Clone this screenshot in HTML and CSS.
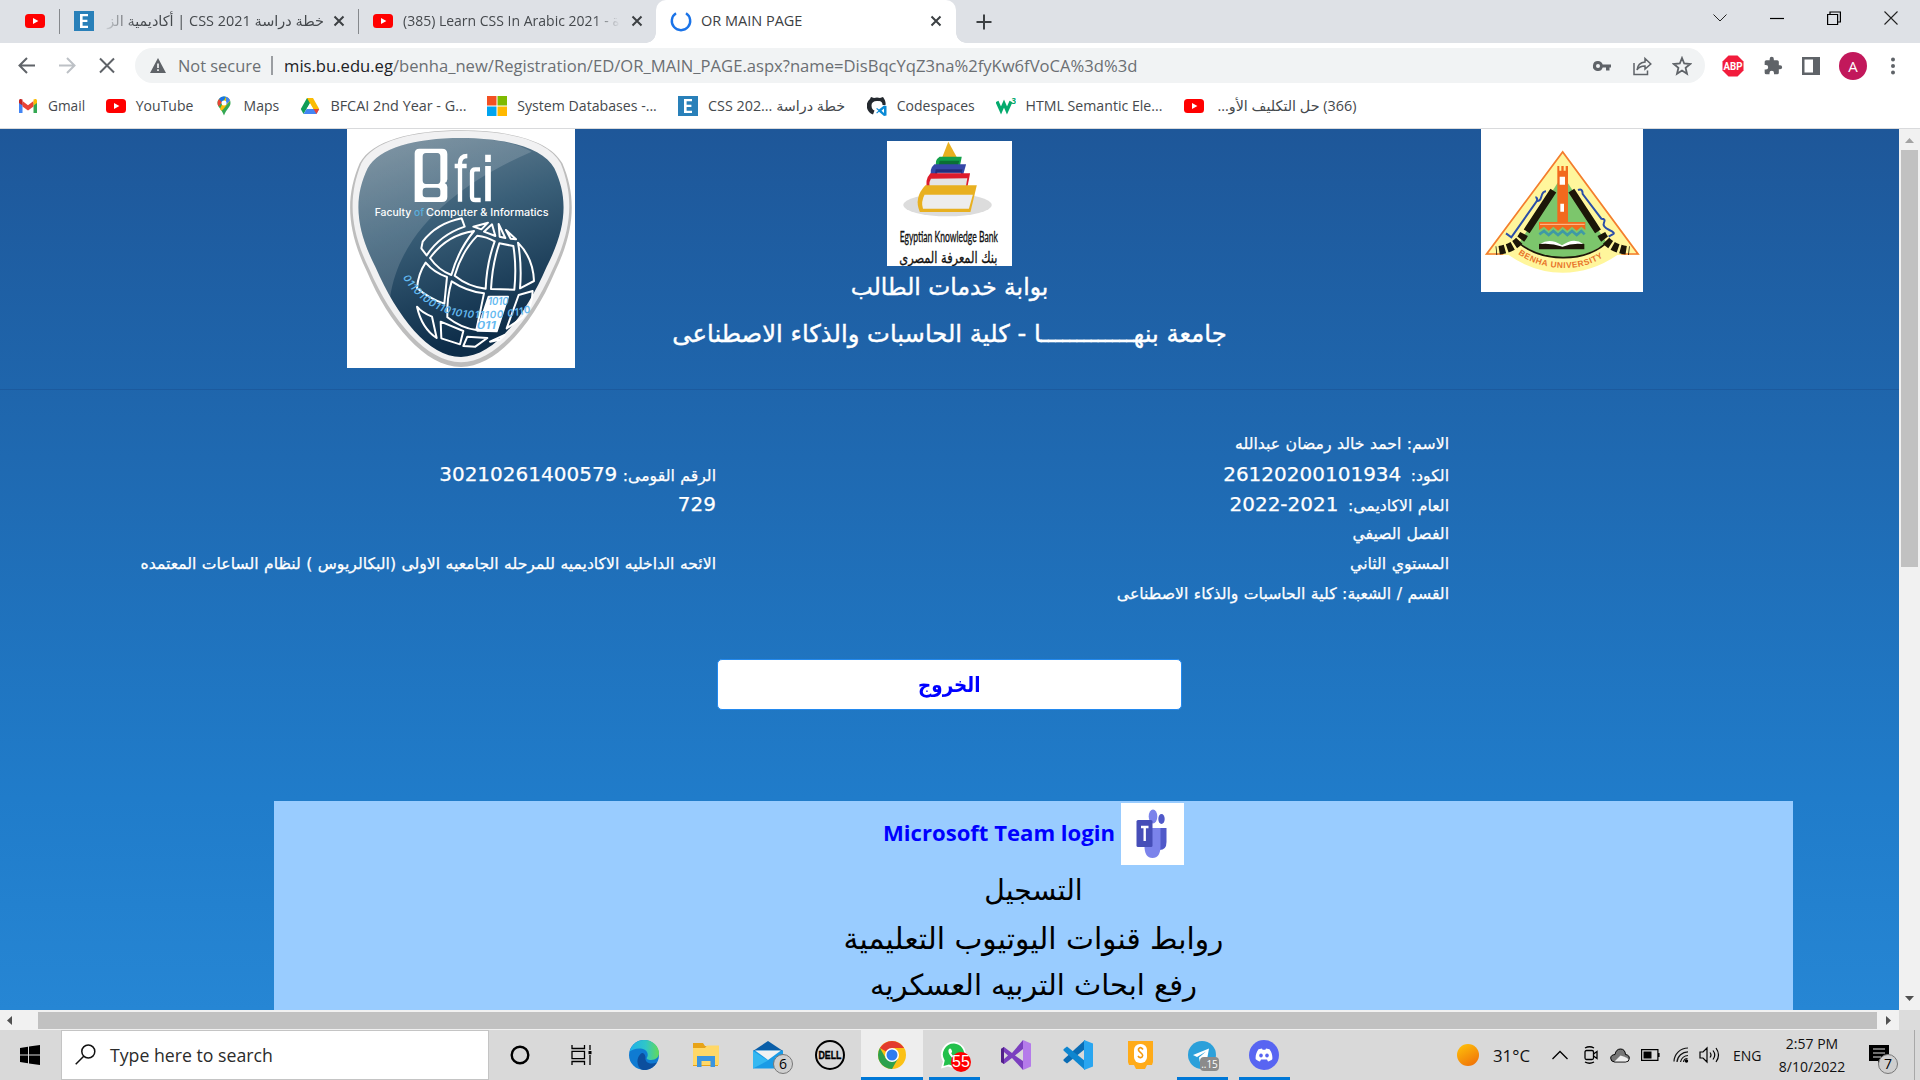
FILE: index.html
```html
<!DOCTYPE html>
<html lang="en">
<head>
<meta charset="utf-8">
<title>OR MAIN PAGE</title>
<link rel="stylesheet" href="styles.css">
</head>
<body>
<svg width="0" height="0" class="defs">
  <symbol id="yt" viewBox="0 0 20 14"><rect width="20" height="14" rx="3.5" fill="#f00"/><path d="M8 4l5.4 3L8 10z" fill="#fff"/></symbol>
  <symbol id="elz" viewBox="0 0 20 20"><path fill="#2980b9" d="M0 0h20v20H0z"/><path fill="#fff" d="M6 3h8v2.2H8.6v3.6h4.8V11H8.6v3.8H14V17H6z"/></symbol>
  <symbol id="x" viewBox="0 0 12 12"><path d="M1.5 1.5l9 9m0-9l-9 9" stroke="#3c4043" stroke-width="2" fill="none"/></symbol>
</svg>

<div class="tabstrip">
  <div class="tab tab-pinned"><svg width="20" height="14"><use href="#yt"/></svg></div>
  <div class="tab tab-a"><svg width="20" height="20"><use href="#elz"/></svg><span class="tab-title rtl fade-l" dir="rtl">خطة دراسة CSS 2021 | أكاديمية الز</span><svg width="12" height="12"><use href="#x"/></svg></div>
  <div class="tab tab-b"><svg width="20" height="14"><use href="#yt"/></svg><span class="tab-title fade-r">(385) Learn CSS In Arabic 2021 - ة</span><svg width="12" height="12"><use href="#x"/></svg></div>
  <div class="tab tab-active">
    <svg width="22" height="22" viewBox="0 0 22 22"><path d="M6 3.3A9.2 9.2 0 1 0 16 3.3" fill="none" stroke="#1a73e8" stroke-width="2.4"/></svg>
    <span class="tab-title wide">OR MAIN PAGE</span><svg width="12" height="12"><use href="#x"/></svg>
  </div>
  <svg class="plus" width="16" height="16" viewBox="0 0 16 16"><path d="M8 .5v15M.5 8h15" stroke="#3c4043" stroke-width="2"/></svg>
  <div class="winbtns">
    <svg width="14" height="14" viewBox="0 0 14 14"><path d="M.5 3.5L7 10l6.500-6.500" fill="none" stroke="#222"/></svg>
    <svg width="14" height="14" viewBox="0 0 14 14"><path d="M0 7.500h14" stroke="#000" stroke-width="1.200"/></svg>
    <svg width="14" height="14" viewBox="0 0 14 14"><path d="M.6 3.500h10v10h-10zM3 3.500V1h10.400v10h-2.600" fill="none" stroke="#000" stroke-width="1.200"/></svg>
    <svg width="14" height="14" viewBox="0 0 14 14"><path d="M.5.5l13 13m0-13l-13 13" fill="none" stroke="#222" stroke-width="1.100"/></svg>
  </div>
</div>

<div class="toolbar">
  <svg class="nav" width="20" height="20" viewBox="0 0 20 20"><path d="M18 9.500H3M10 2L2.500 9.500 10 17" fill="none" stroke="#5f6368" stroke-width="2"/></svg>
  <svg class="nav" width="20" height="20" viewBox="0 0 20 20"><path d="M2 9.500h15M10 2l7.500 7.500L10 17" fill="none" stroke="#bdc1c6" stroke-width="2"/></svg>
  <svg class="nav" width="20" height="20" viewBox="0 0 20 20"><path d="M3 2.500l14 14m0-14l-14 14" stroke="#5f6368" stroke-width="2"/></svg>
  <div class="omnibox">
    <svg width="16" height="15" viewBox="0 0 16 15"><path d="M8 0l8 15H0z" fill="#5f6368"/><path d="M8 5.500v4.500M8 11.300V13" stroke="#f1f3f4" stroke-width="1.700"/></svg>
    <span class="notsec">Not secure</span><i class="bar"></i>
    <span class="url"><b>mis.bu.edu.eg</b>/benha_new/Registration/ED/OR_MAIN_PAGE.aspx?name=DisBqcYqZ3na%2fyKw6fVoCA%3d%3d</span>
    <svg width="20" height="20" viewBox="0 0 20 20"><path d="M6 5a5 5 0 1 0 4.700 6.500H14V14.500h3.500v-3H19v-3h-8.300A5 5 0 0 0 6 5z" fill="#5f6368"/><circle cx="6" cy="10" r="2" fill="#f1f3f4"/></svg>
    <svg width="20" height="20" viewBox="0 0 20 20"><path d="M2 7v11.500h13.500v-4" fill="none" stroke="#5f6368" stroke-width="1.500"/><path d="M5 14c.5-5 3-7.500 8-8V2.500L18.800 8 13 13v-3c-4 0-6.300 1-8 4z" fill="none" stroke="#5f6368" stroke-width="1.500"/></svg>
    <svg width="20" height="20" viewBox="0 0 20 20"><path d="M10 2l2.200 5.500 6 .5-4.600 3.900L15 17.700l-5-3.200-5 3.200 1.400-5.800L1.800 8l6-.5z" fill="none" stroke="#5f6368" stroke-width="1.800"/></svg>
  </div>
  <div class="exts">
    <svg width="22" height="22" viewBox="0 0 22 22"><path d="M6.500.5h9l6 6v9l-6 6h-9l-6-6v-9z" fill="#f21c3c"/><text x="11" y="14.600" text-anchor="middle" font-size="10" font-weight="700" fill="#fff" textLength="19" lengthAdjust="spacingAndGlyphs" font-family="Roboto">ABP</text></svg>
    <svg width="20" height="20" viewBox="0 0 24 24"><path fill="#5f6368" d="M20.500 11H19V7a2 2 0 0 0-2-2h-4V3.500a2.500 2.500 0 0 0-5 0V5H4a2 2 0 0 0-2 2v3.800h1.500a2.700 2.700 0 0 1 0 5.400H2V20a2 2 0 0 0 2 2h3.800v-1.500a2.700 2.700 0 0 1 5.400 0V22H17a2 2 0 0 0 2-2v-4h1.500a2.500 2.500 0 0 0 0-5z"/></svg>
    <svg width="18" height="18" viewBox="0 0 18 18"><path fill="#5f6368" d="M0 0h18v18H0zM2.500 2.500v13h8.500v-13z" fill-rule="evenodd"/></svg>
    <span class="avatar">A</span>
    <svg width="6" height="18" viewBox="0 0 6 18"><g fill="#5f6368"><circle cx="3" cy="2.500" r="2"/><circle cx="3" cy="9" r="2"/><circle cx="3" cy="15.500" r="2"/></g></svg>
  </div>
</div>

<div class="bookmarks">
  <div class="bm"><svg width="20" height="20" viewBox="0 0 20 20"><path d="M1 17V4.500l3.500 2.700V17z" fill="#4285f4"/><path d="M15.500 17V7.200L19 4.500V17z" fill="#34a853"/><path d="M4.500 10.500V5l5.500 4.200L15.500 5v5.500L10 14.600z" fill="#ea4335"/><path d="M1 4.500c0-1.800 2-2 3.500-.9v5.900L1 7z" fill="#c5221f"/><path d="M19 4.500c0-1.800-2-2-3.500-.9v5.900L19 7z" fill="#fbbc04"/></svg><span style="width:37px">Gmail</span></div>
  <div class="bm"><svg width="20" height="14"><use href="#yt"/></svg><span style="width:57px">YouTube</span></div>
  <div class="bm"><svg width="20" height="20" viewBox="0 0 20 20"><path d="M10 .5A6.500 6.500 0 0 0 3.500 7c0 4 4 6 6.500 12.500C12.500 13 16.500 11 16.500 7A6.500 6.500 0 0 0 10 .5z" fill="#34a853"/><path d="M5 2.900A6.500 6.500 0 0 1 12 .8L7.500 6.400z" fill="#1a73e8"/><path d="M5 2.900c-2 2.500-1.800 5.200-.3 7.500L8 6.500z" fill="#ea4335"/><path d="M12 .8c2 .7 3.500 2 4.200 4L9 13.500c-1.400 1.500-2 1.300-3-.8z" fill="#fbbc04"/><path d="M12 .8c1.800.6 3.300 1.800 4 3.600L12 9z" fill="#4285f4"/><circle cx="10" cy="7" r="2.500" fill="#fff"/></svg><span style="width:36px">Maps</span></div>
  <div class="bm"><svg width="20" height="20" viewBox="0 0 20 20"><path d="M7 2h6l-6.500 11L3.500 18 .8 13z" fill="#0f9d58"/><path d="M7 2h6l6.200 11h-6z" fill="#fbbc04"/><path d="M6.600 13h12.600l-2.800 5H3.600z" fill="#4285f4"/><path d="M10 7.500L13.200 13H6.800z" fill="#fff"/><path d="M13.500 13h5.700l-2.700 5z" fill="#ea4335"/></svg><span style="width:136px" class="sp2">BFCAI 2nd Year - G...</span></div>
  <div class="bm"><svg width="20" height="20" viewBox="0 0 20 20"><path fill="#f25022" d="M0 0h9.500v9.500H0z"/><path fill="#7fba00" d="M10.500 0H20v9.500h-9.500z"/><path fill="#00a4ef" d="M0 10.500h9.500V20H0z"/><path fill="#ffb900" d="M10.500 10.500H20V20h-9.500z"/></svg><span style="width:140px" class="sp1">System Databases -...</span></div>
  <div class="bm"><svg width="20" height="20"><use href="#elz"/></svg><span style="width:138px" class="big">CSS 202... خطة دراسة</span></div>
  <div class="bm"><svg width="20" height="20" viewBox="0 0 20 20"><path d="M6 18.500A9 9 0 0 1 3 3l1-2 3 1a10 10 0 0 1 6 0l3-1c2 3 3 5 2.500 8h-3c0-3.500-2-4-5.500-4S4.500 6.500 4.500 9.500c0 3 1.500 4.500 3 5z" fill="#24292f"/><path d="M19.500 10v9.500l-2.500.5-5-4.200-2 1.600-.8-.7 2.200-2-2.200-2 .8-.8 2 1.600L17 9.500zM17 12.500l-2.500 2.200L17 17z" fill="#0a8ad6" fill-rule="evenodd"/></svg><span style="width:78px">Codespaces</span></div>
  <div class="bm"><svg width="20" height="20" viewBox="0 0 20 20"><path d="M1 5.500l4 9 3-7 3 7 4-9" fill="none" stroke="#04aa6d" stroke-width="3.200"/><text x="15.500" y="8" font-size="8" font-weight="700" fill="#04aa6d" font-family="Open Sans">3</text></svg><span style="width:138px" class="sp1">HTML Semantic Ele...</span></div>
  <div class="bm"><svg width="20" height="14"><use href="#yt"/></svg><span style="width:142px" class="big" dir="rtl">(366) حل التكليف الأو...</span></div>
</div>

<div class="view">
  <div class="page">
    <header class="hero">
      <svg class="bfci" width="228" height="239" viewBox="51 27 684 717">
        <defs>
          <linearGradient id="g1" x1="0" y1="0" x2=".3" y2="1"><stop offset="0" stop-color="#6f8797"/><stop offset=".45" stop-color="#3a5f78"/><stop offset="1" stop-color="#0d2d49"/></linearGradient>
          <linearGradient id="g2" x1="0" y1="0" x2="1" y2="1"><stop offset="0" stop-color="#fff" stop-opacity=".14"/><stop offset="1" stop-color="#fff" stop-opacity=".16"/></linearGradient>
        </defs>
        <path fill="#fff" d="M51 27h684v717H51z"/>
        <path fill="#bdbdbd" d="M393 31C540 31 660 62 697 130C740 230 735 330 675 455C610 610 500 741 393 741C286 741 176 610 111 455C50 330 46 230 89 130C126 62 246 31 393 31z"/>
        <path fill="#f1f1f2" d="M393 33C540 33 655 62 692 130C732 230 727 325 668 448C602 600 496 727 393 727C290 727 184 600 118 448C58 325 54 230 94 130C131 62 246 33 393 33z"/>
        <path fill="url(#g1)" d="M393 54C530 54 640 84 673 145C714 230 712 320 650 440C585 590 490 711 393 711C296 711 201 590 136 440C74 320 72 230 113 145C146 84 256 54 393 54z"/>
        <path fill="url(#g2)" d="M393 54C470 54 550 64 605 95C430 170 210 310 180 535C160 500 150 475 136 440C74 320 72 230 113 145C146 84 256 54 393 54z"/>
        <path fill="#fff" fill-rule="evenodd" d="M254 100q0-14 14-14h68q16 0 16 16v76q0 8-8 11q8 3 8 12v30q0 15-16 15h-82zM278 110q0-11 10-11h34q9 0 9 11v71q0 11-9 11h-34q-10 0-10-11zM278 213q0-10 10-10h34q9 0 9 10v9q0 10-9 10h-34q-10 0-10-10z"/>
        <g fill="none" stroke="#fff"><path d="M390 245V130q0-22 22-22M374 138h36M450 148h-14q-10 0-10 10v72q0 10 10 10h16" stroke-width="13"/><path d="M474 138v106M474 104v22" stroke-width="17"/></g>
        <g font-family="Inter" font-size="29" font-weight="500" fill="#fff"><text x="134" y="287" textLength="110" lengthAdjust="spacingAndGlyphs">Faculty</text><text x="252" y="287" textLength="30" lengthAdjust="spacingAndGlyphs" fill="#5aaede">of</text><text x="288" y="287" textLength="368" lengthAdjust="spacingAndGlyphs">Computer &amp; Informatics</text></g>
        <g fill="none" stroke="#fff" stroke-width="6" stroke-linejoin="round">
          <path d="M395 295Q320 310 278 365L274 385L290 406Q330 345 404 320z"/>
          <path d="M300 414Q350 345 432 333Q385 390 364 465Q325 450 300 414z"/>
          <path d="M374 467Q395 395 442 347Q470 350 494 364Q470 430 467 506Q415 500 374 467z"/>
          <path d="M508 370l42 8q10 60 3 131l-70-2q4-75 25-137z"/>
          <path d="M564 368q45 45 48 115l-42 22q6-70-6-137z"/>
          <path d="M430 320l44-12-20 20zM462 335l24-22 10 35zM506 312l20 42-17-4zM528 330l30 28-16-2z"/>
          <path d="M287 428q25 30 64 43l-8 80q-45-15-82-47q4-44 26-76z"/>
          <path d="M365 484q45 30 97 36l-23 110q-45-5-87-38q-2-60 13-108z"/>
          <path d="M476 530h58l-34 104-58-2z" fill="#fff"/>
          <path d="M566 525l42-12q0 45-30 80l-48 32z"/>
          <path d="M261 560q15 18 45 30l14 64q-45-30-59-94z"/>
          <path d="M332 605l68 28-10 40-56-18zM412 650l60 4-36 26-36-2zM480 665l44-20-14 14z"/>
        </g>
        <path id="bits" d="M218 472Q290 588 430 594T640 560" fill="none"/>
        <text font-family="Inter" font-size="30" font-style="italic" font-weight="600" fill="#64b9f0"><textPath href="#bits" textLength="430">0110100110101011100 0110</textPath></text>
        <g font-family="Inter" font-size="30" font-style="italic" fill="#64b9f0" font-weight="600"><text x="474" y="556" textLength="62" lengthAdjust="spacingAndGlyphs">1010</text><text x="440" y="628" textLength="58" lengthAdjust="spacingAndGlyphs">011</text></g>
      </svg>

      <div class="title">
        <svg width="125" height="125" viewBox="625 33 316 375" preserveAspectRatio="none">
          <path fill="#fff" d="M625 33h316v375H625z"/>
          <ellipse cx="778" cy="225" rx="112" ry="34" fill="#dcdcdc"/>
          <path d="M780 35l24 52h-41z" fill="#e8b020"/>
          <path d="M758 80h56l-5 30h-58q-8-18 7-30z" fill="#12a04a"/><path d="M758 92h50l-4 14h-48z" fill="#0b6f35"/>
          <path d="M745 103h80l-10 42h-77q-8-28 7-42z" fill="#3547a8"/><path d="M748 118h68l-5 20h-65z" fill="#222e7e"/><path d="M752 130h60" stroke="#dfe3ff" stroke-width="3"/>
          <path d="M735 130h100l-9 56h-98q-10-36 7-56z" fill="#dd1c2c"/><path d="M736 146l92-1-5 34h-87q-8-16 0-33z" fill="#e4e4e4"/>
          <path d="M722 166h130l-16 80H708q-16-42 14-80z" fill="#e8b020"/><path d="M720 194h122l-10 42H716q-6-20 4-42z" fill="#ededed"/>
          <g text-anchor="middle" fill="#111"><text x="781" y="337" font-family="Lato" font-size="44" textLength="248" lengthAdjust="spacingAndGlyphs" stroke="#111">Egyptian Knowledge Bank</text><text x="780" y="398" font-family="DejaVu Sans" font-size="46" textLength="248" lengthAdjust="spacingAndGlyphs" stroke="#111">بنك المعرفة المصرى</text></g>
        </svg>
        <h1 dir="rtl" class="h-a">بوابة خدمات الطالب</h1>
        <h1 dir="rtl" class="h-b">جامعة بنهـــــــــــــا - كلية الحاسبات والذكاء الاصطناعى</h1>
      </div>

      <svg class="benha" width="162" height="163" viewBox="63 27 486 489">
        <path fill="#fff" d="M63 27h486v489H63z"/>
        <path d="M308 92L540 405H472Q395 458 308 458T146 405H74z" fill="#fff69c"/>
        <path d="M130 402H80L308 96 534 402h-50" fill="none" stroke="#f47b30" stroke-width="5"/>
        <path d="M308 165L440 368Q380 412 308 413T178 368z" fill="#7cc66c"/>
        <path d="M280 212L200 334M334 212L414 334" stroke="#1c1608" stroke-width="21" fill="none"/>
        <path d="M192 342q-22 44-84 50M424 342q22 44 84 50" stroke="#1c1608" stroke-width="26" stroke-dasharray="18 7" fill="none"/>
        <path d="M178 370Q230 412 308 413T438 370" fill="none" stroke="#1c1608" stroke-width="5"/>
        <path d="M292 138h6v14h6v-14h7v14h6v-14h7v170H292z" fill="#f26a1e"/><path d="M299 170h16v24h-16zM301 251h11v24h-11z" fill="#fff"/>
        <path d="M237 306h139v24l-12-10-14 12-14-12-14 12-14-12-14 12-14-12-14 12-14-12-15 10z" fill="#f26a1e"/><path d="M240 313h134" stroke="#ffc69a" stroke-width="3"/>
        <path d="M238 343l14-10 14 12 14-12 14 12 14-12 14 12 14-12 14 12 14-12 10 10" fill="none" stroke="#3f9aa5" stroke-width="8"/>
        <path d="M237 372q40-12 70 8q30-20 66-8v16H237z" fill="#1c1608"/><path d="M240 372q30-20 66 4q35-26 64-4q-34-4-62 8q-36-12-68-8z" fill="#fff"/>
        <g fill="none" stroke="#2b4ea8" stroke-width="6"><path d="M138 340l16 12 76-108q4-12-4-12m2 10q12 4 16-12t14-16"/><path d="M354 210q14-6 14 12l56 74q14 0 8 12t16 22 8 14l-10 6"/></g>
        <path id="bu" d="M174 402Q230 442 308 444T443 402" fill="none"/>
        <text font-family="Liberation Sans" font-size="25" font-weight="700" fill="#e8742a"><textPath href="#bu" textLength="270">BENHA UNIVERSITY</textPath></text>
      </svg>
    </header>

    <section class="info" dir="rtl">
      <div class="col col-r">
        <p>الاسم: احمد خالد رمضان عبدالله</p>
        <p>الكود: <b>26120200101934</b></p>
        <p>العام الاكاديمى: <b dir="ltr">2022-2021</b></p>
        <p>الفصل الصيفي</p>
        <p>المستوي الثاني</p>
        <p>القسم / الشعبة: كلية الحاسبات والذكاء الاصطناعى</p>
      </div>
      <div class="col col-l">
        <p>&nbsp;</p>
        <p>الرقم القومى: <b>30210261400579</b></p>
        <p><b>729</b></p>
        <p>&nbsp;</p>
        <p class="long">الائحه الداخليه الاكاديميه للمرحله الجامعيه الاولى (البكالريوس ) لنظام الساعات المعتمده</p>
      </div>
    </section>

    <div class="exit" dir="rtl"><span>الخروج</span></div>

    <section class="panel">
      <div class="teams"><span>Microsoft Team login</span>
        <svg width="63" height="62" viewBox="0 0 63 62"><path fill="#fff" d="M0 0h63v62H0z"/><g><ellipse cx="40.500" cy="16" rx="3.200" ry="5" fill="#5059c9"/><path d="M36 25h9.500v14q0 8-7 8h-3z" fill="#5059c9"/><ellipse cx="32" cy="13.500" rx="4.300" ry="7" fill="#7b83eb"/><path d="M24 25h15.500v18q0 12-8 12t-8-12z" fill="#7b83eb"/><rect x="15.500" y="17" width="16" height="27" rx="1.500" fill="#464eb8"/><path d="M20 24h7.500M23.700 24v14" stroke="#fff" stroke-width="2.400"/></g></svg>
      </div>
      <p dir="rtl" class="p1">التسجيل</p>
      <p dir="rtl" class="p2">روابط قنوات اليوتيوب التعليمية</p>
      <p dir="rtl" class="p3">رفع ابحاث التربيه العسكريه</p>
    </section>
  </div>
  <div class="vbar">
    <svg width="9" height="5" viewBox="0 0 9 5"><path d="M0 5l4.500-5L9 5z" fill="#a3a3a3"/></svg>
    <i></i>
    <svg width="9" height="5" viewBox="0 0 9 5"><path d="M0 0l4.500 5L9 0z" fill="#505050"/></svg>
  </div>
</div>
<div class="hbar">
  <svg width="5" height="9" viewBox="0 0 5 9"><path d="M5 0L0 4.500 5 9z" fill="#505050"/></svg>
  <i></i>
  <svg width="5" height="9" viewBox="0 0 5 9"><path d="M0 0l5 4.500L0 9z" fill="#505050"/></svg>
  <span class="corner"></span>
</div>

<div class="taskbar">
  <div class="start"><svg width="20" height="20" viewBox="0 0 20 20"><path d="M0 3l8-1.200v7.700H0zM9 1.600L20 0v9.500H9zM0 10.500h8v7.700L0 17zM9 10.500h11V20L9 18.400z"/></svg></div>
  <div class="search"><svg width="21" height="21" viewBox="0 0 21 21"><circle cx="13.300" cy="7.500" r="6.500" fill="none" stroke="#111" stroke-width="1.500"/><path d="M8.700 12.300L.7 20.300" stroke="#111" stroke-width="1.500"/></svg><span>Type here to search</span></div>
  <div class="apps">
    <div><svg width="20" height="20" viewBox="0 0 20 20"><circle cx="10" cy="10" r="8.300" fill="none" stroke="#000" stroke-width="2.400"/></svg></div>
    <div><svg width="22" height="20" viewBox="0 0 22 20"><g fill="none" stroke="#000" stroke-width="1.300"><path d="M1 0v3.500h12.500V0M1 20v-3.500h12.500V20M1 6.300h12.500v7.400H1zM19 0v5M19 10v10"/></g><path d="M17.500 6h3v3.200h-3z"/></svg></div>
    <div><svg width="30" height="30" viewBox="0 0 30 30"><defs><linearGradient id="ed" x1="0" x2="1"><stop offset="0" stop-color="#1fb0ea"/><stop offset=".55" stop-color="#30c6c8"/><stop offset="1" stop-color="#64da58"/></linearGradient></defs><circle cx="15" cy="15" r="15" fill="#0f7bd2"/><path d="M.6 11.500C3 4 8.500 0 15 0c9 0 15 6.500 15 13 0 4-3 7-8 7-3 0-5-1-4-2.500 2-3 0-8.500-6-9C7 8 3 9.500.6 11.500z" fill="url(#ed)"/><path d="M16.500 17c-1 6 5 8 11.500 5.500C24.500 28.500 18 31 13 29.800 8 27 6.500 19 11.500 14c1.500-1.500 4-1.500 5 3z" fill="#0c4f9e"/><path d="M16 16c-1 5 4 7.500 12 5.500l2-3.500V30l-4-4 2-3c-7 2-14-1-13-6.500z" fill="none"/></svg></div>
    <div><svg width="28" height="26" viewBox="0 0 28 26"><path d="M1 1h10l2 3h13v20H1z" fill="#e8a317"/><path d="M1 6h12l2-2.500h12V23H1z" fill="#ffd868"/><path d="M5 25V14h18v11h-4.500v-6h-9v6z" fill="#3b95e0"/></svg></div>
    <div><svg width="30" height="28" viewBox="0 0 30 28"><path d="M0 10L15 0l15 10v3H0z" fill="#0a5ea8"/><path d="M0 9.500h30V27.500H0z" fill="#1a9be6"/><path d="M2 9.500h26L15 19z" fill="#f2f2f2"/><path d="M0 10l15 9.500L0 27.500z" fill="#35b8f1"/></svg><b class="badge bg-grey">6</b></div>
    <div><svg width="30" height="30" viewBox="0 0 30 30"><circle cx="15" cy="15" r="14" fill="none" stroke="#000" stroke-width="2"/><text x="15" y="18.800" text-anchor="middle" font-family="Liberation Sans" font-weight="700" font-size="10.500" textLength="23" lengthAdjust="spacingAndGlyphs" stroke="#000" stroke-width=".3">DELL</text></svg></div>
    <div class="on focus"><svg width="28" height="28" viewBox="0 0 28 28"><circle cx="14" cy="14" r="14" fill="#fbc116"/><path d="M14 14L1.900 7A14 14 0 0 1 26.100 7H14z" fill="#e33b2e"/><path d="M1.900 7A14 14 0 0 0 14 28l6-10.500-6-3.500-6 3.500z" fill="#2ca14c"/><circle cx="14" cy="14" r="7" fill="#fff"/><circle cx="14" cy="14" r="5.500" fill="#2e7cf0"/></svg></div>
    <div class="on"><svg width="28" height="28" viewBox="0 0 28 28"><path d="M14 .5a13 13 0 0 0-11 20L1 27.500l7-2A13 13 0 1 0 14 .5z" fill="#fff"/><path d="M14 2.500a11 11 0 0 0-9.300 17L3.500 25l5.500-1.400A11 11 0 1 0 14 2.500z" fill="#23c04b"/><path d="M9 8c1.500-1.500 2.500.5 3 2s-1 1.500-.7 2.500c1 2 2.500 3.200 4.500 4 1-.2 1-1.800 2.200-1.300 3 1 3 1.500 1.500 3C15 22 6 12 9 8z" fill="#fff"/></svg><b class="badge bg-red">55</b></div>
    <div><svg width="30" height="30" viewBox="0 0 30 30"><path d="M0 9l3-2 8 6L22 0v9l-8 6.500L22 21v9L11 18 3 24l-3-2zM3 12v7l4-3.500z" fill="#7b3fbf" fill-rule="evenodd"/><path d="M0 9l3-2v17l-3-2z" fill="#52218a"/><path d="M22 0l8 3.500v23L22 30z" fill="#b57bea"/></svg></div>
    <div><svg width="30" height="30" viewBox="0 0 30 30"><path d="M22 0v9L4 23.500l-3.500-2.800V19.500z" fill="#0a6cb4"/><path d="M22 30v-9L4 6.500.5 9.300v1.200z" fill="#0e86d0"/><path d="M21 0l9 3.500v23L21 30z" fill="#2aa6f0"/></svg></div>
    <div><svg width="27" height="28" viewBox="0 0 27 28"><path d="M1 0h25v21l-1 3h-5l-2 4h-9l-2-4H2l-1-3z" fill="#ffab19"/><rect x="7" y="3" width="13" height="19" rx="6" fill="#fff"/><path d="M16 8.500q-2.500-3.500-4.500-.5c-1 3 4.500 4 4.200 6.500s-3.200 3-4.700.5" fill="none" stroke="#f59a0c" stroke-width="1.600"/></svg></div>
    <div class="on"><svg width="28" height="28" viewBox="0 0 28 28"><circle cx="14" cy="14" r="14" fill="#2ba0da"/><path d="M5 14l16-6.500-2.500 14-4.500-3.200-2.200 2.500-.8-4.300 7-6-9 5.500z" fill="#fff"/></svg><b class="badge bg-sq">..15</b></div>
    <div class="on"><svg width="30" height="30" viewBox="0 0 30 30"><circle cx="15" cy="15" r="15" fill="#5865f2"/><path d="M9.500 9.300L13 8.500l.6 1.200h2.800l.6-1.200 3.500.8c2.300 3.200 3.200 6.500 2.800 10-1.500 1.300-3 2-4.300 2.200l-1-1.900h-6l-1 1.900c-1.300-.2-2.800-.9-4.300-2.200-.4-3.500.5-6.800 2.800-10z" fill="#fff"/><ellipse cx="12" cy="15.500" rx="1.800" ry="2" fill="#5865f2"/><ellipse cx="18" cy="15.500" rx="1.800" ry="2" fill="#5865f2"/></svg></div>
  </div>
  <div class="tray">
    <i class="sun"></i><span class="temp">31°C</span>
    <svg class="t1" width="16" height="10" viewBox="0 0 16 10"><path d="M.5 9L8 1.500 15.500 9" fill="none" stroke="#000" stroke-width="1.300"/></svg>
    <svg class="t2" width="16" height="18" viewBox="0 0 16 18"><g fill="none" stroke="#000" stroke-width="1.300"><rect x="2" y="4.500" width="8.500" height="9" rx="1.500"/><path d="M10.500 8l3.500-2.500v7L10.500 10M2 2Q6.500-.5 11 2M2 16q4.500 2.500 9 0"/></g></svg>
    <svg class="t3" width="20" height="15" viewBox="0 0 20 15"><path d="M4.500 14Q.7 13.500.7 10.200T5 6.500Q6 1 10.500 1t5 5.500q4 .5 3.800 4T15.500 14z" fill="#777" stroke="#000"/><path d="M4.500 13.500l6-6q7 2 8 4-.5 2-3 2z" fill="#eee"/></svg>
    <svg class="t4" width="19" height="12" viewBox="0 0 19 12"><path d="M.6.6h16.300v10.800H.6zM18 4v4" fill="none" stroke="#000" stroke-width="1.200"/><path d="M2.500 2.500h8v7h-8z"/></svg>
    <svg class="t5" width="16" height="16" viewBox="0 0 16 16"><g fill="none" stroke="#111" stroke-width="1.200"><path d="M1 14.500A14 14 0 0 1 15 1M4 15A11 11 0 0 1 15 4.800M7.500 15A8 8 0 0 1 15 8.500M10.500 15a4 4 0 0 1 4-3.500"/></g><circle cx="13.500" cy="14" r="1.700"/></svg>
    <svg class="t6" width="22" height="18" viewBox="0 0 22 18"><path d="M1 6h3l4-4v14l-4-4H1zM11 6.500q2 2.500 0 5M14 4.500q3.500 4.500 0 9M17 2q5 7 0 14" fill="none" stroke="#000" stroke-width="1.200"/></svg>
    <span class="eng">ENG</span>
    <div class="clock"><span>2:57 PM</span><span>8/10/2022</span></div>
    <div class="note"><svg width="20" height="18" viewBox="0 0 20 18"><path d="M0 0h20v16h-7l-4 2v-2H0z"/><path d="M4 4h12M4 8h12M4 12h8" stroke="#ddd" stroke-width="1.200"/></svg><b class="badge bg-grey n7">7</b></div>
  </div>
  <i class="peek"></i>
</div>
</body>
</html>
```
FILE: styles.css
```css
* { box-sizing: border-box; margin: 0; padding: 0; }
body {
  width: 1920px; height: 1080px; overflow: hidden;
  display: flex; flex-direction: column;
  font-family: "Open Sans", "DejaVu Sans", sans-serif; background: #fff;
}
svg { display: block; flex: none; }
.defs { position: absolute; }

/* tab strip */
.tabstrip { height: 43px; flex: none; background: #dee1e6; display: flex; align-items: center; font-size: 14px; color: #45494d; }
.tab { display: flex; align-items: center; height: 43px; padding-bottom: 1px; }
.tab-pinned { width: 60px; padding-left: 25px; height: 25px; border-right: 1px solid #85888c; }
.tab-a { width: 299px; height: 25px; padding-left: 14px; gap: 8px; border-right: 1px solid #85888c; }
.tab-b { width: 297px; padding-left: 14px; gap: 10px; }
.tab-title { white-space: nowrap; overflow: hidden; width: 222px; line-height: 24px; }
.tab-a .tab-title { font-size: 14.450px; margin-right: 1px; }
.tab-b .tab-title { width: 217px; margin-right: 1px; }
.fade-l { -webkit-mask: linear-gradient(to right, transparent, #000 34px); mask: linear-gradient(to right, transparent, #000 34px); }
.fade-r { -webkit-mask: linear-gradient(to left, transparent, #000 26px); mask: linear-gradient(to left, transparent, #000 26px); }
.tab-active { width: 300px; background: #fff; border-radius: 10px 10px 0 0; padding-left: 14px; gap: 9px; color: #3c4043; position: relative; }
.tab-active .tab-title { width: 220px; font-size: 14.500px; }
.tab-active::before, .tab-active::after { content: ""; position: absolute; bottom: 0; width: 10px; height: 10px; }
.tab-active::before { left: -10px; background: radial-gradient(circle at 0 0, #dee1e6 9.500px, #fff 10px); }
.tab-active::after { right: -10px; background: radial-gradient(circle at 100% 0, #dee1e6 9.500px, #fff 10px); }
.plus { margin-left: 20px; }
.winbtns { margin-left: auto; display: flex; gap: 43px; padding-right: 22px; padding-bottom: 7px; }

/* toolbar */
.toolbar { height: 45px; flex: none; display: flex; align-items: center; padding: 0 24px 0 17px; }
.nav { margin-right: 20px; }
.omnibox { width: 1570px; height: 35px; margin-left: -2px; border-radius: 18px; background: #f1f3f4; display: flex; align-items: center; padding: 0 13px 0 15px; gap: 20px; color: #6b6f73; font-size: 16.620px; white-space: nowrap; }
.notsec { font-size: 16.400px; width: 84px; margin-left: -8px; }
.bar { width: 2px; height: 19px; background: #9a9da1; margin-left: -11px; }
.url { flex: 1; margin-left: -9px; }
.url b { font-weight: 400; color: #202124; }
.exts { display: flex; align-items: center; margin-left: auto; }
.exts svg + svg { margin-left: 19px; }
.exts .avatar { margin: 0 23px 0 19px; }
.avatar { width: 28px; height: 28px; border-radius: 50%; background: #c2185b; color: #fff; font-size: 15px; line-height: 28px; text-align: center; }

/* bookmarks */
.bookmarks { height: 41px; flex: none; display: flex; align-items: center; padding: 0 0 4px 18px; gap: 20.800px; border-bottom: 1px solid #d9dadc; font-size: 14px; color: #45494d; }
.bm { display: flex; align-items: center; gap: 10px; }
.bm span { white-space: nowrap; line-height: 22px; }
.bm:first-child span { font-size: 13.700px; }
.sp1 { font-size: 14.150px; }
.sp2 { font-size: 14.400px; }
.big { font-size: 14.350px; }

/* web page */
.view { flex: none; height: 881px; display: flex; }
.page { width: 1899px; height: 881px; overflow: hidden; background: linear-gradient(#1e5799, #207cca 76%, #2686d4); color: #fff; font-family: "DejaVu Sans", sans-serif; }
.hero { height: 261px; display: flex; align-items: flex-start; padding-left: 347px; border-bottom: 1px solid #1c5a9e; }
.title { width: 749px; display: flex; flex-direction: column; align-items: center; padding-top: 12px; }
.benha { margin-left: 157px; }
.title h1 { font-weight: 400; white-space: nowrap; height: 45px; line-height: 43px; -webkit-text-stroke: .4px #fff; }
.h-a { font-size: 23.400px; }
.title .h-b { font-size: 24.250px; line-height: 46px; }
.info { display: flex; padding: 39px 450px 0 0; font-size: 15.700px; word-spacing: .5px; -webkit-text-stroke: .25px #fff; }
.col { flex: none; }
.col-r { width: 733px; }
.col p { height: 30px; line-height: 30px; white-space: nowrap; }
.col p.long { font-size: 15.650px; }
.col b { font-weight: 400; font-size: 20px; margin-right: 2px; }
.col p b:first-child:last-child { margin-right: 0; }
.col-r p b:last-child { margin-right: 4px !important; }
.exit { width: 465px; height: 51px; margin: 50px 0 0 717px; background: #fff; border: 1px solid #2389ee; border-radius: 5px; color: #00f; font: 700 21.300px/49px "DejaVu Sans", sans-serif; text-align: center; }
.exit span { display: inline-block; transform: scaleX(.86); }
.panel { width: 1519px; height: 220px; margin: 91px 0 0 274px; background: #9cf; color: #000; text-align: center; }
.teams { display: flex; justify-content: center; align-items: center; gap: 6px; padding-top: 2px; height: 64px; color: #00f; font: 700 22.100px/56px "Open Sans", sans-serif; }
.teams span { padding-bottom: 5px; }
.panel p { line-height: 47px; height: 47.500px; white-space: nowrap; font-size: 29.700px; }
.panel .p1 { font-size: 28.300px; margin-top: 2px; }
.panel .p3 { font-size: 28.900px; }

/* scrollbars */
.vbar { width: 21px; background: #f1f1f1; display: flex; flex-direction: column; align-items: center; padding: 9px 0; }
.vbar i { width: 17px; height: 417px; margin: 7px 0 auto; background: #c1c1c1; }
.hbar { height: 20px; flex: none; background: #f1f1f1; display: flex; align-items: center; padding-left: 7px; }
.hbar i { width: 1839px; height: 17px; margin: 0 9px 0 26px; background: #c1c1c1; }
.hbar .corner { width: 21px; height: 20px; margin-left: auto; background: #dcdcdc; }

/* taskbar */
.taskbar { height: 50px; flex: none; background: #d9d9d9; display: flex; align-items: stretch; }
.start { width: 61px; display: flex; align-items: center; padding-left: 20px; }
.search { width: 428px; background: #fff; border: 1px solid #c4c4c4; display: flex; align-items: center; padding: 0 0 1px 13px; gap: 14px; font-size: 17.700px; color: #2b2b2b; }
.apps { display: flex; width: 808px; }
.apps div { width: 62px; flex: none; display: flex; align-items: center; justify-content: center; position: relative; }
.apps div.on::after { content: ""; position: absolute; left: 6px; right: 5px; bottom: 0; height: 3px; background: #0078d7; }
.apps div.focus { background: #eee; }
.apps div.focus::after { left: 0; right: 0; }
.badge { position: absolute; left: 36px; top: 24px; width: 20px; height: 20px; border-radius: 50%; font: 400 14px/19px "Liberation Sans", sans-serif; text-align: center; }
.bg-grey { background: #cfcfcf; border: 1px solid #777; font-family: "Open Sans", sans-serif; line-height: 18px; color: #000; }
.bg-red { left: 28px; top: 22px; background: #f00; color: #fff; font-size: 16px; line-height: 20px; }
.bg-sq { left: 29px; top: 27px; width: 19px; height: 14px; border-radius: 4px; background: #8b8b8b; color: #fff; font: 10px/14px "Open Sans", sans-serif; }
.tray { flex: 1; display: flex; align-items: center; font-size: 14px; color: #111; }
.sun { width: 22px; height: 22px; flex: none; border-radius: 50%; margin-left: 160px; background: linear-gradient(150deg, #ffc60a, #ef6a08); }
.temp { font-size: 16.800px; width: 38px; margin-left: 14px; }
.t1 { margin-left: 21px; }
.t2 { margin-left: 15px; }
.t3 { margin-left: 11px; }
.t4 { margin-left: 11px; }
.t5 { margin-left: 13px; }
.t6 { margin-left: 10px; }
.eng { width: 30px; margin-left: 12px; }
.clock { width: 72px; margin-left: 13px; display: flex; flex-direction: column; align-items: center; line-height: 23px; white-space: nowrap; padding-bottom: 1px; }
.note { position: relative; margin-left: 21px; padding-bottom: 2px; }
.n7 { left: 9px; top: 9px; }
.peek { width: 1px; margin-right: 5px; background: #a8a8a8; }
```
